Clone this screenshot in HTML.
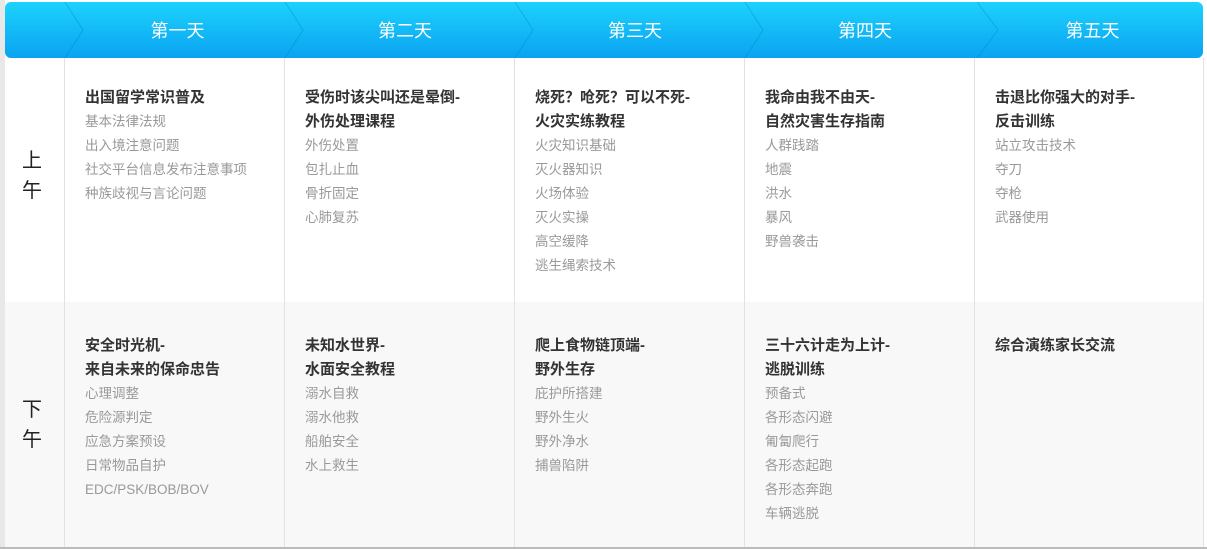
<!DOCTYPE html>
<html><head><meta charset="utf-8"><style>
*{margin:0;padding:0;box-sizing:border-box}
body{width:1207px;height:549px;background:#fff;position:relative;overflow:hidden;font-family:"Liberation Sans","Noto Sans CJK SC",sans-serif}
.lb{position:absolute;left:0;top:0;width:5px;height:549px;background:#e8e8e8}
.hd{position:absolute;left:5px;top:2px;width:1198px;height:56px;border-radius:6px;background:linear-gradient(#1dd2fc,#0aa3f1);overflow:hidden}
.hd .t{position:absolute;top:1px;height:56px;line-height:56px;color:#fff;font-size:18px;text-align:center}
.row{position:absolute;left:5px;width:1198px}
.r1{top:58px;height:244px;background:#fff}
.r2{top:302px;height:245px;background:#f8f8f8}
.bt{position:absolute;left:0;top:547px;width:1207px;height:2px;background:#bbb}
.vl{position:absolute;top:58px;height:489px;width:1px;background:#e2e2e2}
.lab{position:absolute;left:22px;font-size:20px;line-height:30px;color:#222;width:30px}
.c{position:absolute;font-size:13.5px;line-height:24px;color:#999}
.c b{display:block;font-size:15px;color:#333;font-weight:bold}
</style></head><body>
<div class="lb"></div>
<div class="hd">
<svg width="1198" height="56" style="position:absolute;left:0;top:0">
<g fill="none" stroke="rgba(0,110,190,0.3)" stroke-width="1">
<path d="M60 0 L78 28 L60 56"/><path d="M280 0 L298 28 L280 56"/><path d="M510 0 L528 28 L510 56"/><path d="M740 0 L758 28 L740 56"/><path d="M972 0 L993 28 L972 56"/>
</g></svg>
<div class="t" style="left:60px;width:225px">第一天</div>
<div class="t" style="left:285px;width:230px">第二天</div>
<div class="t" style="left:515px;width:230px">第三天</div>
<div class="t" style="left:745px;width:230px">第四天</div>
<div class="t" style="left:975px;width:225px">第五天</div>
</div>
<div class="row r1"></div><div class="row r2"></div>
<div class="vl" style="left:64px"></div><div class="vl" style="left:284px"></div><div class="vl" style="left:514px"></div><div class="vl" style="left:744px"></div><div class="vl" style="left:974px"></div><div class="vl" style="left:1203px"></div>
<div class="bt"></div>
<div class="lab" style="top:146px">上<br>午</div>
<div class="lab" style="top:395px">下<br>午</div>

<div class="c" style="left:85px;top:86px"><b>出国留学常识普及</b>基本法律法规<br>出入境注意问题<br>社交平台信息发布注意事项<br>种族歧视与言论问题</div>
<div class="c" style="left:305px;top:86px"><b>受伤时该尖叫还是晕倒-<br>外伤处理课程</b>外伤处置<br>包扎止血<br>骨折固定<br>心肺复苏</div>
<div class="c" style="left:535px;top:86px"><b>烧死？呛死？可以不死-<br>火灾实练教程</b>火灾知识基础<br>灭火器知识<br>火场体验<br>灭火实操<br>高空缓降<br>逃生绳索技术</div>
<div class="c" style="left:765px;top:86px"><b>我命由我不由天-<br>自然灾害生存指南</b>人群践踏<br>地震<br>洪水<br>暴风<br>野兽袭击</div>
<div class="c" style="left:995px;top:86px"><b>击退比你强大的对手-<br>反击训练</b>站立攻击技术<br>夺刀<br>夺枪<br>武器使用</div>

<div class="c" style="left:85px;top:334px"><b>安全时光机-<br>来自未来的保命忠告</b>心理调整<br>危险源判定<br>应急方案预设<br>日常物品自护<br>EDC/PSK/BOB/BOV</div>
<div class="c" style="left:305px;top:334px"><b>未知水世界-<br>水面安全教程</b>溺水自救<br>溺水他救<br>船舶安全<br>水上救生</div>
<div class="c" style="left:535px;top:334px"><b>爬上食物链顶端-<br>野外生存</b>庇护所搭建<br>野外生火<br>野外净水<br>捕兽陷阱</div>
<div class="c" style="left:765px;top:334px"><b>三十六计走为上计-<br>逃脱训练</b>预备式<br>各形态闪避<br>匍匐爬行<br>各形态起跑<br>各形态奔跑<br>车辆逃脱</div>
<div class="c" style="left:995px;top:334px"><b>综合演练家长交流</b></div>
</body></html>
